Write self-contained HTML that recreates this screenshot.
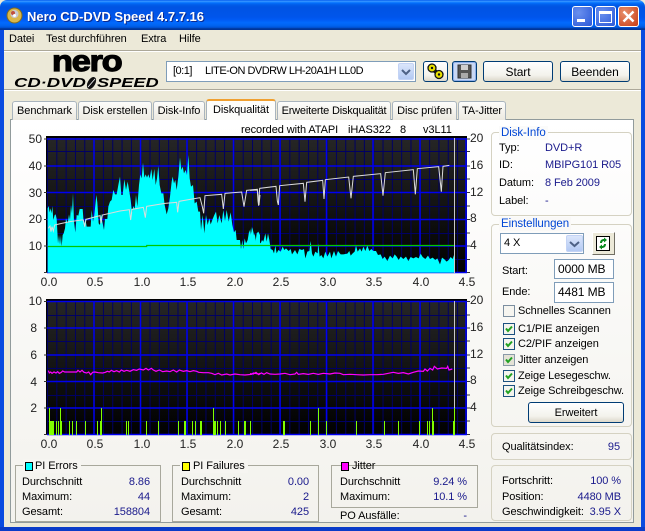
<!DOCTYPE html>
<html><head><meta charset="utf-8"><style>
html,body{margin:0;padding:0;background:#0a3cc8}
#w{position:relative;width:645px;height:531px;overflow:hidden;background:#ece9d8;font-family:"Liberation Sans",sans-serif;font-size:11px;letter-spacing:-.08px;color:#000}
#w div,#w span.t{position:absolute;box-sizing:border-box}
.t{position:absolute;white-space:nowrap;line-height:14px;height:14px}
.r{text-align:right}
.v{color:#1a1a8c}
.c{color:#0046d5}
.tab{top:101px;height:19px;background:linear-gradient(#fdfdfb,#ece9e0);border:1px solid #a9b4bd;border-bottom:none;border-radius:3px 3px 0 0;text-align:center;line-height:19px;white-space:nowrap}
.btn{background:linear-gradient(#fff,#f3f2ec 70%,#dcd8ca);border:1px solid #003c74;border-radius:3px;text-align:center;white-space:nowrap}
.gb{border:1px solid #d5d2c2;border-radius:4px}
.sb{border:1px solid #a8a89c}
.inp{background:#fff;border:1px solid #7f9db9;line-height:19px;padding-left:3px;white-space:nowrap}
.dd{background:linear-gradient(#dbe6fb,#b3c9f3);border:1px solid #c3d3f5;border-radius:2px}
.cb{width:12px;height:12px;left:503px;background:#f4f4ee;border:1px solid #1c5180}
.lbl{background:#f6f5f1;padding:0 2px}
</style></head><body><div id="w">
<div style="left:0;top:0;width:645px;height:30px;border-radius:7px 7px 0 0;background:linear-gradient(#0058ee,#3593ff 4%,#288eff 6%,#127dff 8%,#036ffc 10%,#0262ee 14%,#0057e5 20%,#0054e3 24%,#0055eb 56%,#005bf5 66%,#026afe 76%,#0062ef 86%,#0052d6 92%,#0040ab 94%,#003092)"></div>
<div style="left:0;top:30px;width:4px;height:501px;background:#0a4be0"></div>
<div style="left:641px;top:30px;width:4px;height:501px;background:#0a4be0"></div>
<div style="left:0;top:527px;width:645px;height:4px;background:#0a3cc8"></div>
<svg style="position:absolute;left:6px;top:7px" width="17" height="17" viewBox="0 0 17 17"><circle cx="8.500" cy="8.500" r="7.500" fill="#d9b64a" stroke="#7f6a20"/><circle cx="8.500" cy="7" r="4" fill="#c9c9d6"/><circle cx="7" cy="6" r="2" fill="#c05040"/><circle cx="8.500" cy="8.500" r="1.500" fill="#fff"/></svg>
<span class="t" style="left:27px;top:10px;color:#fff;font-weight:bold;font-size:13px;letter-spacing:0;text-shadow:1px 1px #0a2a90">Nero CD-DVD Speed 4.7.7.16</span>
<div style="left:572px;top:6px;width:21px;height:21px;border:1px solid #fff;border-radius:3px;background:radial-gradient(circle at 30% 30%,#6a90ee,#2a58d8)"></div>
<div style="left:577px;top:19px;width:8px;height:3px;background:#fff"></div>
<div style="left:595px;top:6px;width:21px;height:21px;border:1px solid #fff;border-radius:3px;background:radial-gradient(circle at 30% 30%,#6a90ee,#2a58d8)"></div>
<div style="left:599px;top:11px;width:13px;height:12px;border:1px solid #fff;border-top-width:3px"></div>
<div style="left:618px;top:6px;width:21px;height:21px;border:1px solid #fff;border-radius:3px;background:radial-gradient(circle at 30% 30%,#e8906c,#c83c14)"></div>
<svg style="position:absolute;left:618px;top:6px" width="21" height="21"><path d="M5.500 5.500L15.500 15.500M15.500 5.500L5.500 15.500" stroke="#fff" stroke-width="2.400"/></svg>
<span class="t" style="left:9px;top:32px">Datei</span><span class="t" style="left:46px;top:32px">Test durchführen</span><span class="t" style="left:141px;top:32px">Extra</span><span class="t" style="left:179px;top:32px">Hilfe</span>
<div style="left:4px;top:50px;width:637px;height:2px;border-top:1px solid #aca899;border-bottom:1px solid #fff"></div>
<div style="left:4px;top:89px;width:637px;height:2px;border-top:1px solid #aca899;border-bottom:1px solid #fff"></div>
<span class="t" style="left:52px;top:49px;height:26px;line-height:26px;font-weight:bold;font-size:30px;letter-spacing:-1px;-webkit-text-stroke:1.2px #000;transform-origin:0 50%;transform:scaleX(1.14)">nero</span>
<span class="t" style="left:14px;top:76px;font-weight:bold;font-style:italic;font-size:13px;letter-spacing:0;transform-origin:0 50%;transform:scaleX(1.42)">CD·DVD</span>
<svg style="position:absolute;left:84px;top:76px" width="15" height="14"><ellipse cx="7.500" cy="7" rx="3.800" ry="6.500" transform="rotate(30 7.500 7)" fill="#111"/><path d="M4 11L11 3" stroke="#fff" stroke-width=".8"/></svg>
<span class="t" style="left:97px;top:76px;font-weight:bold;font-style:italic;font-size:13px;letter-spacing:0;transform-origin:0 50%;transform:scaleX(1.4)">SPEED</span>
<div class="inp" style="left:166px;top:61px;width:250px;height:21px;padding-left:6px;letter-spacing:-.5px">[0:1]</div>
<span class="t" style="left:205px;top:64px;letter-spacing:-.5px">LITE-ON DVDRW LH-20A1H LL0D</span>
<div class="dd" style="left:398px;top:63px;width:16px;height:17px"></div>
<svg style="position:absolute;left:398px;top:63px" width="16" height="17"><path d="M4 7L8 11L12 7" fill="none" stroke="#4d6185" stroke-width="2"/></svg>
<div class="btn" style="left:423px;top:61px;width:25px;height:21px"></div>
<svg style="position:absolute;left:423px;top:61px" width="25" height="21"><path d="M9 8L16 13" stroke="#111" stroke-width="4"/><circle cx="9" cy="7" r="4" fill="#e8e000" stroke="#111" stroke-width="1.300"/><circle cx="16" cy="13.500" r="4" fill="#e8e000" stroke="#111" stroke-width="1.300"/><circle cx="9" cy="7" r="1.200" fill="#111"/><circle cx="16" cy="13.500" r="1.200" fill="#111"/></svg>
<div class="btn" style="left:452px;top:61px;width:25px;height:21px;background:#c9d8f4;box-shadow:inset 0 0 0 1px #8fb0ea"></div>
<svg style="position:absolute;left:452px;top:61px" width="25" height="21"><path d="M6 4H19V17H6Z" fill="#555" stroke="#333"/><path d="M9 4H16V9H9Z" fill="#cfcfcf"/><path d="M9 12H16V17H9Z" fill="#aaa"/></svg>
<div class="btn" style="left:483px;top:61px;width:70px;height:21px;line-height:20px;font-size:12px">Start</div>
<div class="btn" style="left:560px;top:61px;width:70px;height:21px;line-height:20px;font-size:12px">Beenden</div>

<div style="left:10px;top:119px;width:624px;height:404px;background:linear-gradient(#fff,#f3f2ed);border:1px solid #919b9c"></div>
<div class="tab" style="left:12px;width:65px">Benchmark</div>
<div class="tab" style="left:78px;width:74px">Disk erstellen</div>
<div class="tab" style="left:153px;width:52px">Disk-Info</div>
<div class="tab" style="left:206px;top:99px;width:70px;height:21px;background:#fdfdfa;border-top:2px solid #f0a030;border-color:#f0a030 #a9b4bd #fff;line-height:18px">Diskqualität</div>
<div class="tab" style="left:277px;width:114px;letter-spacing:-.2px">Erweiterte Diskqualität</div>
<div class="tab" style="left:392px;width:65px">Disc prüfen</div>
<div class="tab" style="left:458px;width:48px">TA-Jitter</div>

<span class="t" style="left:241px;top:123px">recorded with ATAPI</span><span class="t" style="left:348px;top:123px">iHAS322</span><span class="t" style="left:400px;top:123px">8</span><span class="t" style="left:423px;top:123px">v3L11</span>

<svg style="position:absolute;left:0;top:0" width="645" height="531" font-family="Liberation Sans" font-size="12" fill="#222" letter-spacing="0">
<defs>
<linearGradient id="bg" x1="0" y1="0" x2="0" y2="1"><stop offset="0" stop-color="#262626"/><stop offset="1" stop-color="#000"/></linearGradient>
<pattern id="vm" patternUnits="userSpaceOnUse" x="47" y="0" width="9.320" height="10"><rect x="0" width="1" height="10" fill="#000064"/></pattern>
</defs>
<g id="c1">
<rect x="46" y="136" width="421" height="137" fill="#000"/>
<rect x="47" y="138" width="420" height="135" fill="url(#bg)"/>
<rect x="47" y="138" width="420" height="135" fill="url(#vm)"/>
<path d="M47 151.500H467M47 179.500H467M47 206.500H467M47 233.500H467M47 259.500H467" stroke="#000064"/>
<path d="M94 138V273M140.500 138V273M187 138V273M233.500 138V273M280 138V273M326.500 138V273M373 138V273M420 138V273M466 138V273" stroke="#0000f0" stroke-width="1.500"/>
<path d="M47 139H467M47 166H467M47 192.500H467M47 219.500H467M47 246H467M47 272.500H467" stroke="#0000f0" stroke-width="1.500"/>
<g transform="translate(20,125) scale(.33333)">
<polygon fill="#00ffff" points="83,443 83,250 86,243 89,262 92,250 95,265 97,243 100,285 104,270 107,268 110,282 114,355 117,330 120,358 123,330 125,365 128,330 131,325 135,310 138,280 143,295 147,268 150,285 153,240 156,265 159,205 162,290 166,322 170,270 175,272 179,252 188,252 192,305 196,280 200,305 212,305 215,255 219,290 223,270 229,210 232,232 236,295 240,300 243,265 246,285 249,300 252,315 255,282 262,282 265,245 270,230 275,225 280,195 285,208 290,208 295,180 300,155 304,210 308,210 313,163 318,195 323,170 328,200 332,225 336,262 340,243 344,252 348,210 352,245 357,180 361,148 365,160 369,113 373,158 377,148 381,158 385,148 389,160 394,132 398,165 403,132 407,180 411,160 415,123 419,180 424,205 430,205 434,240 440,268 445,250 450,215 455,170 458,155 462,175 466,165 470,195 475,155 480,98 484,135 488,125 492,145 497,135 501,150 505,90 509,160 513,185 519,180 524,235 530,230 535,260 540,260 543,315 548,270 553,325 558,270 563,300 568,280 572,298 578,282 583,270 588,260 593,295 598,270 605,295 610,255 615,288 620,255 626,290 632,262 637,300 642,322 647,315 650,345 656,345 660,345 663,372 667,345 670,372 674,340 678,355 683,345 688,315 692,332 697,308 701,325 706,355 710,325 715,320 720,330 720,443"/>
<path d="M85 310L90 303L93 320L96 305L100 318L104 300L125 295L150 290L185 285L190 285L194 305L198 283L240 272L243 295L247 270L300 258L328 254L332 285L336 253L370 247L376 278L380 244L435 235L470 232L473 262L477 229L540 218L547 245L551 265L555 212L605 208L610 252L615 205L665 201L672 245L680 196L712 193L717 240L720 210" fill="none" stroke="#dcdcdc" stroke-width="3"/>
<path d="M83 364.500L380 364.500V361.500L720 361.500" fill="none" stroke="#00c800" stroke-width="3.500"/>
</g>
<g transform="translate(250,125) scale(.33333)">
<polygon fill="#00ffff" points="0,443 0,310 3,330 6,305 10,340 14,325 18,350 24,330 28,350 32,355 36,345 40,350 46,325 50,350 54,325 58,345 62,372 68,375 72,385 76,362 80,385 85,375 92,380 98,365 103,375 108,370 116,378 122,372 126,388 135,375 142,388 148,372 156,375 162,372 166,400 172,380 178,378 182,348 186,385 190,395 196,380 203,385 205,355 209,395 214,390 220,400 226,380 232,395 240,380 244,400 252,378 258,395 264,378 272,388 280,388 292,386 298,378 302,392 308,385 314,380 318,362 323,380 330,370 335,380 340,365 346,378 352,362 358,378 364,372 370,378 378,378 384,390 392,388 398,402 404,395 412,408 420,392 428,400 434,388 440,395 446,405 452,395 460,402 468,395 475,408 482,396 490,400 498,396 506,400 512,386 518,396 526,402 534,392 540,402 548,398 556,405 562,400 570,418 576,398 582,402 590,410 596,405 602,396 608,402 612,390 612,443"/>
<path d="M0 196L22 195L24 228L26 242L29 190L78 184L82 228L85 240L89 182L160 175L165 230L170 172L218 166L222 222L226 164L296 156L303 220L310 154L392 146L399 212L406 143L490 134L496 208L502 131L566 125L574 200L579 124L598 121" fill="none" stroke="#dcdcdc" stroke-width="3"/>
<path d="M0 361.500H612" stroke="#00c800" stroke-width="3.500"/>
</g>
<path d="M454.500 138V273" stroke="#c8c8c8"/>
<path d="M467 139h3M467 151.500h3M467 166h3M467 179h3M467 192.500h3M467 206h3M467 219.500h3M467 233h3M467 246h3M467 259.500h3M467 272.500h3M44 139h3M44 166h3M44 192.500h3M44 219.500h3M44 246h3M44 272.500h3" stroke="#333"/>
</g>
<g id="c2">
<rect x="46" y="299" width="421" height="136" fill="#000"/>
<rect x="47" y="301" width="420" height="134" fill="url(#bg)"/>
<rect x="47" y="301" width="420" height="134" fill="url(#vm)"/>
<path d="M47 315.500H467M47 341.500H467M47 368.500H467M47 395.500H467M47 421.500H467" stroke="#000064"/>
<path d="M94 301V435M140.500 301V435M187 301V435M233.500 301V435M280 301V435M326.500 301V435M373 301V435M420 301V435M466 301V435" stroke="#0000f0" stroke-width="1.500"/>
<path d="M47 301.500H467M47 328H467M47 355H467M47 381.500H467M47 408H467M47 434.500H467" stroke="#0000f0" stroke-width="1.500"/>
<g transform="translate(20,290) scale(.33333)" fill="none">
<path d="M85 242L88 249L92 246L96 250L102 246L108 249L113 245L118 250L124 247L128 243L134 246L150 246L170 246L174 241L180 246L186 241L192 247L200 249L206 246L212 254L218 247L225 246L235 248L248 249L256 247L262 244L268 246L274 241L282 245L290 242L298 246L304 240L312 244L320 241L330 244L340 239L350 241L358 237L370 240L378 235L385 240L394 235L400 240L408 244L418 240L428 245L440 243L450 245L460 240L470 246L478 240L490 244L500 242L510 245L520 242L530 244L536 247L550 248L565 248L575 250L585 254L595 250L605 255L620 252L630 255L645 252L660 254L675 255L695 253L700 249L715 252L720 250" stroke="#ff00ff" stroke-width="3.600"/>
</g>
<g transform="translate(250,290) scale(.33333)" fill="none">
<path d="M0 251L10 252L18 247L26 254L34 249L42 253L50 248L60 252L75 253L90 252L105 250L120 254L135 252L140 247L145 253L160 251L175 253L190 250L205 253L220 250L240 252L255 249L270 250L280 254L300 253L320 254L340 255L360 254L380 254L400 253L415 250L430 247L445 250L460 248L475 252L490 247L505 243L520 244L525 237L532 243L540 235L548 240L553 229L562 237L575 234L590 235L593 229L597 240L607 237" stroke="#ff00ff" stroke-width="3.600"/>
</g>
<path d="M454.500 301V408" stroke="#c8c8c8"/>
<g fill="#80ff00">
<rect x="49" y="408" width="1" height="27"/><rect x="50" y="421" width="3" height="14"/><rect x="53" y="421" width="1" height="14"/><rect x="56" y="421" width="1" height="14"/><rect x="58" y="421" width="1" height="14"/><rect x="60" y="421" width="2" height="14"/><rect x="60" y="408" width="1" height="27"/><rect x="69" y="421" width="1" height="14"/><rect x="72" y="421" width="1" height="14"/><rect x="76" y="421" width="1" height="14"/><rect x="85" y="421" width="1" height="14"/><rect x="97" y="421" width="1" height="14"/><rect x="100" y="421" width="2" height="14"/><rect x="101" y="408" width="1" height="27"/><rect x="126" y="421" width="1" height="14"/><rect x="128" y="421" width="1" height="14"/><rect x="146" y="421" width="1" height="14"/><rect x="158" y="421" width="1" height="14"/><rect x="178" y="421" width="1" height="14"/><rect x="184" y="421" width="2" height="14"/><rect x="192" y="421" width="1" height="14"/><rect x="195" y="421" width="1" height="14"/><rect x="200" y="421" width="2" height="14"/><rect x="213" y="408" width="1" height="27"/><rect x="214" y="421" width="2" height="14"/><rect x="217" y="421" width="1" height="14"/><rect x="220" y="421" width="1" height="14"/><rect x="225" y="421" width="1" height="14"/><rect x="238" y="421" width="1" height="14"/><rect x="244" y="421" width="2" height="14"/><rect x="250" y="421" width="1" height="14"/><rect x="283" y="421" width="2" height="14"/><rect x="310" y="421" width="1" height="14"/><rect x="318" y="408" width="1" height="27"/><rect x="326" y="421" width="1" height="14"/><rect x="356" y="421" width="1" height="14"/><rect x="384" y="421" width="1" height="14"/><rect x="398" y="421" width="1" height="14"/><rect x="419" y="421" width="1" height="14"/><rect x="427" y="421" width="1" height="14"/><rect x="429" y="421" width="1" height="14"/><rect x="432" y="408" width="1" height="27"/><rect x="433" y="421" width="1" height="14"/><rect x="453" y="421" width="1" height="14"/><rect x="454" y="408" width="1" height="27"/>
</g>
<path d="M467 301.500h3M467 315h3M467 328h3M467 341h3M467 355h3M467 368h3M467 381.500h3M467 395h3M467 408h3M467 421h3M467 434.500h3M44 301.500h3M44 328h3M44 355h3M44 381.500h3M44 408h3M44 434.500h3" stroke="#333"/>
</g>
<g text-anchor="end">
<text x="42" y="143">50</text><text x="42" y="170">40</text><text x="42" y="197">30</text><text x="42" y="223">20</text><text x="42" y="250">10</text>
<text x="42" y="305">10</text><text x="37" y="332">8</text><text x="37" y="359">6</text><text x="37" y="386">4</text><text x="37" y="412">2</text>
</g>
<g>
<text x="470" y="142">20</text><text x="470" y="169">16</text><text x="470" y="196">12</text><text x="470" y="222">8</text><text x="470" y="249">4</text>
<text x="470" y="304">20</text><text x="470" y="331">16</text><text x="470" y="358">12</text><text x="470" y="384">8</text><text x="470" y="411">4</text>
</g>
<g text-anchor="middle">
<text x="49" y="286">0.0</text><text x="95" y="286">0.5</text><text x="142" y="286">1.0</text><text x="188" y="286">1.5</text><text x="235" y="286">2.0</text><text x="281" y="286">2.5</text><text x="328" y="286">3.0</text><text x="374" y="286">3.5</text><text x="421" y="286">4.0</text><text x="467" y="286">4.5</text>
<text x="49" y="448">0.0</text><text x="95" y="448">0.5</text><text x="142" y="448">1.0</text><text x="188" y="448">1.5</text><text x="235" y="448">2.0</text><text x="281" y="448">2.5</text><text x="328" y="448">3.0</text><text x="374" y="448">3.5</text><text x="421" y="448">4.0</text><text x="467" y="448">4.5</text>
</g>
</svg>

<div class="gb" style="left:491px;top:132px;width:141px;height:84px"></div>
<span class="t c" style="left:499px;top:126px;background:#fbfbfa;padding:0 2px;font-size:11.500px">Disk-Info</span>
<span class="t" style="left:499px;top:141px">Typ:</span><span class="t v" style="left:545px;top:141px">DVD+R</span>
<span class="t" style="left:499px;top:158px">ID:</span><span class="t v" style="left:545px;top:158px">MBIPG101 R05</span>
<span class="t" style="left:499px;top:176px">Datum:</span><span class="t v" style="left:545px;top:176px">8 Feb 2009</span>
<span class="t" style="left:499px;top:194px">Label:</span><span class="t v" style="left:545px;top:194px">-</span>

<div class="gb" style="left:491px;top:224px;width:141px;height:203px"></div>
<span class="t c" style="left:499px;top:217px;background:#faf9f7;padding:0 2px;font-size:11.500px">Einstellungen</span>
<div class="inp" style="left:500px;top:233px;width:84px;height:21px;padding-left:3px">4 X</div>
<div class="dd" style="left:566px;top:235px;width:17px;height:17px"></div>
<svg style="position:absolute;left:566px;top:235px" width="17" height="17"><path d="M4 7L8.500 11L13 7" fill="none" stroke="#4d6185" stroke-width="2"/></svg>
<div style="left:592px;top:232px;width:23px;height:23px;background:#ece9d8;border:1px solid;border-color:#fff #716f64 #716f64 #fff"></div>
<svg style="position:absolute;left:596px;top:236px" width="15" height="16"><rect x=".5" y=".5" width="13" height="14" fill="#fff" stroke="#000"/><path d="M4 7C4 4 6 3 8 3V1.500L11 4L8 6.500V5C6.500 5 6 6 6 7ZM10 8C10 11 8 12 6 12V13.500L3 11L6 8.500V10C7.500 10 8 9 8 8Z" fill="#0a8a20"/></svg>
<span class="t" style="left:502px;top:264px">Start:</span>
<div class="inp" style="left:554px;top:259px;width:60px;height:20px;line-height:18px;font-size:12px">0000 MB</div>
<span class="t" style="left:502px;top:285px">Ende:</span>
<div class="inp" style="left:554px;top:282px;width:60px;height:21px;line-height:19px;font-size:12px">4481 MB</div>
<div class="cb" style="top:305px;background:#f6f5f0;border-color:#7b8ea0"></div><span class="t" style="left:518px;top:304px">Schnelles Scannen</span>
<div class="cb" style="top:323px"></div><span class="t" style="left:518px;top:322px">C1/PIE anzeigen</span>
<div class="cb" style="top:338px"></div><span class="t" style="left:518px;top:337px">C2/PIF anzeigen</span>
<div class="cb" style="top:354px;background:#e4e2d6;border-color:#8a9aa8"></div><span class="t" style="left:518px;top:353px">Jitter anzeigen</span>
<div class="cb" style="top:370px"></div><span class="t" style="left:518px;top:369px">Zeige Lesegeschw.</span>
<div class="cb" style="top:385px"></div><span class="t" style="left:518px;top:384px">Zeige Schreibgeschw.</span>
<svg style="position:absolute;left:503px;top:323px" width="12" height="75" fill="none" stroke="#21a121" stroke-width="2"><path d="M3 5.500L5 8L9 3.500"/><path d="M3 20.500L5 23L9 18.500"/><path d="M3 36.500L5 39L9 34.500"/><path d="M3 52.500L5 55L9 50.500"/><path d="M3 67.500L5 70L9 65.500"/></svg>
<div class="btn" style="left:528px;top:402px;width:96px;height:21px;line-height:20px">Erweitert</div>

<div class="gb" style="left:491px;top:433px;width:141px;height:27px"></div>
<span class="t" style="left:502px;top:440px">Qualitätsindex:</span><span class="t v r" style="left:580px;top:440px;width:40px">95</span>
<div class="gb" style="left:491px;top:465px;width:141px;height:56px"></div>
<span class="t" style="left:502px;top:474px">Fortschritt:</span><span class="t v r" style="left:571px;top:474px;width:50px">100 %</span>
<span class="t" style="left:502px;top:490px">Position:</span><span class="t v r" style="left:561px;top:490px;width:60px">4480 MB</span>
<span class="t" style="left:502px;top:505px">Geschwindigkeit:</span><span class="t v r" style="left:571px;top:505px;width:50px">3.95 X</span>

<div class="sb" style="left:15px;top:465px;width:146px;height:57px"></div>
<span class="t lbl" style="left:23px;top:459px;padding-left:12px;padding-right:3px">PI Errors</span>
<div style="left:25px;top:462px;width:8px;height:9px;background:#00ffff;border:1px solid #000"></div>
<span class="t" style="left:22px;top:475px">Durchschnitt</span><span class="t v r" style="left:100px;top:475px;width:50px">8.86</span>
<span class="t" style="left:22px;top:490px">Maximum:</span><span class="t v r" style="left:100px;top:490px;width:50px">44</span>
<span class="t" style="left:22px;top:505px">Gesamt:</span><span class="t v r" style="left:90px;top:505px;width:60px">158804</span>

<div class="sb" style="left:172px;top:465px;width:147px;height:57px"></div>
<span class="t lbl" style="left:180px;top:459px;padding-left:13px;padding-right:3px">PI Failures</span>
<div style="left:182px;top:462px;width:8px;height:9px;background:#ffff00;border:1px solid #000"></div>
<span class="t" style="left:181px;top:475px">Durchschnitt</span><span class="t v r" style="left:259px;top:475px;width:50px">0.00</span>
<span class="t" style="left:181px;top:490px">Maximum:</span><span class="t v r" style="left:259px;top:490px;width:50px">2</span>
<span class="t" style="left:181px;top:505px">Gesamt:</span><span class="t v r" style="left:259px;top:505px;width:50px">425</span>

<div class="sb" style="left:331px;top:465px;width:147px;height:43px"></div>
<span class="t" style="left:352px;top:459px">Jitter</span>
<div style="left:341px;top:462px;width:8px;height:9px;background:#ff00ff;border:1px solid #000"></div>
<span class="t" style="left:340px;top:475px">Durchschnitt</span><span class="t v r" style="left:417px;top:475px;width:50px">9.24 %</span>
<span class="t" style="left:340px;top:490px">Maximum:</span><span class="t v r" style="left:417px;top:490px;width:50px">10.1 %</span>
<span class="t" style="left:340px;top:509px">PO Ausfälle:</span><span class="t v r" style="left:417px;top:509px;width:50px">-</span>
</div></body></html>
